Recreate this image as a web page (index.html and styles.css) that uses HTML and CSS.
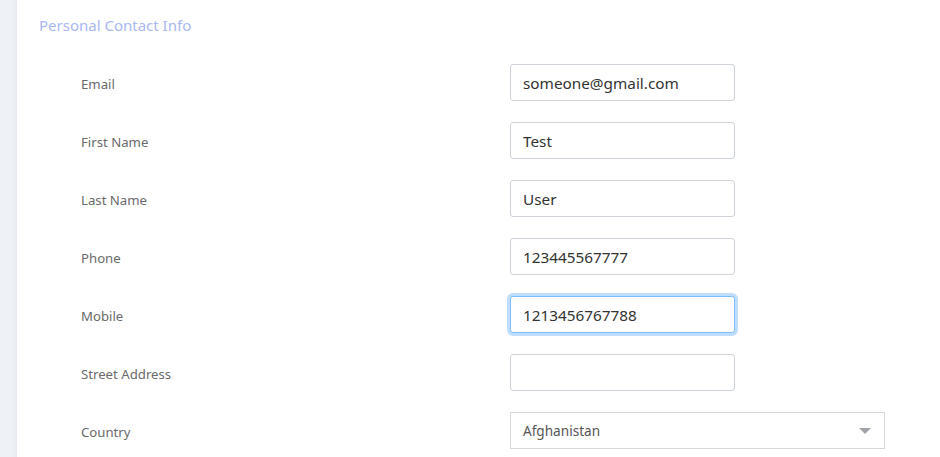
FILE: index.html
```
<!DOCTYPE html>
<html>
<head>
<meta charset="utf-8">
<link rel="stylesheet" href="styles.css">
</head>
<body>
<div class="page">
  <aside class="strip"></aside>
  <main class="panel">
    <h2 class="title">Personal Contact Info</h2>
    <form class="form">
      <div class="row"><label class="label">Email</label><input class="field" type="text" value="someone@gmail.com"></div>
      <div class="row"><label class="label">First Name</label><input class="field" type="text" value="Test"></div>
      <div class="row"><label class="label">Last Name</label><input class="field" type="text" value="User"></div>
      <div class="row"><label class="label">Phone</label><input class="field" type="text" value="123445567777"></div>
      <div class="row"><label class="label">Mobile</label><input class="field focus" type="text" value="1213456767788"></div>
      <div class="row"><label class="label">Street Address</label><input class="field" type="text" value=""></div>
      <div class="row"><label class="label">Country</label>
        <div class="select"><span class="select-text">Afghanistan</span><span class="caret"></span></div>
      </div>
    </form>
  </main>
</div>
</body>
</html>
```
FILE: styles.css
```
html, body {
  margin: 0;
  padding: 0;
  background: #fff;
  overflow: hidden;
}
.page {
  display: flex;
  height: 457px;
  font-family: "Noto Sans", "Open Sans", sans-serif;
}
.strip {
  width: 17px;
  flex: none;
  background: linear-gradient(to right, #eef2f6 0%, #eef2f6 70%, #e6ecf1 100%);
}
.panel {
  flex: 1;
  padding: 0 0 0 22px;
}
.title {
  margin: 0;
  padding-top: 14px;
  height: 50px;
  box-sizing: border-box;
  font-size: 15px;
  line-height: 22px;
  font-weight: 400;
  color: #a9b8f2;
  font-family: "Noto Sans", sans-serif;
}
.form {
  display: flex;
  flex-direction: column;
  padding-left: 42px;
  padding-top: 14px;
}
.row {
  display: grid;
  grid-template-columns: 429px auto;
  align-items: start;
  height: 58px;
  align-content: start;
}
.label {
  font-size: 13.2px;
  color: #6a6a6a;
  line-height: 37px;
  padding-top: 2px;
}
.field {
  box-sizing: border-box;
  width: 225px;
  height: 37px;
  border: 1px solid #ced4da;
  border-radius: 3px;
  padding: 0 12px;
  font-family: "Noto Sans", sans-serif;
  font-size: 15.3px;
  color: #333;
  background: #fff;
  outline: none;
}
.field.focus {
  border-color: #80bdff;
  box-shadow: 0 0 0 3px rgba(0, 123, 255, 0.25);
}
.select {
  box-sizing: border-box;
  width: 375px;
  height: 37px;
  border: 1px solid #d4d8dd;
  display: flex;
  align-items: center;
  justify-content: space-between;
  padding: 0 13px 0 12px;
}
.select-text {
  font-size: 13.6px;
  color: #555;
}
.caret {
  width: 0;
  height: 0;
  border-left: 6px solid transparent;
  border-right: 6px solid transparent;
  border-top: 6px solid #a0a4a8;
}
```
